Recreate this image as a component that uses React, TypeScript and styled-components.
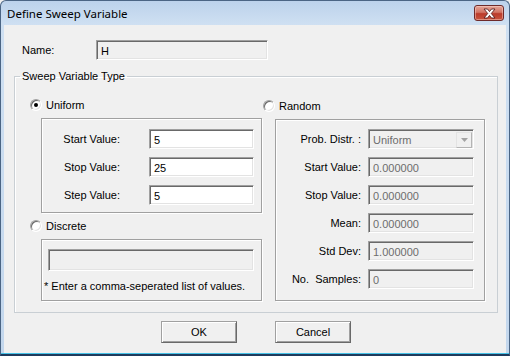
import { Fragment } from 'react';
import styled, { createGlobalStyle } from 'styled-components';

const GlobalStyle = createGlobalStyle`
  html, body {
    margin: 0;
    padding: 0;
    background: #f0f0f0;
  }
  body {
    font-family: 'Liberation Sans', Arial, sans-serif;
    font-size: 11px;
    color: #000;
  }
  * {
    box-sizing: border-box;
  }
`;

const Window = styled.div`
  width: 510px;
  height: 356px;
  display: flex;
  flex-direction: column;
  padding: 0 3px 1px;
  border: 1px solid #4b6584;
  border-bottom: 2px solid #1f3b5c;
  border-radius: 6px 6px 0 0;
  background: linear-gradient(#bcd2eb, #cfe0f2 24px, #c3d7ed);
  box-shadow: inset 0 -1px 0 #45c1e6;
`;

const TitleBar = styled.div`
  height: 24px;
  display: flex;
  align-items: center;
  justify-content: space-between;
  padding: 0 2px 0 3px;
`;

const Title = styled.span`
  font-family: 'Noto Sans', 'Liberation Sans', sans-serif;
  font-size: 11.5px;
  color: #000;
`;

const CloseButton = styled.div`
  width: 30px;
  height: 16px;
  display: flex;
  align-items: center;
  justify-content: center;
  border: 1px solid #6e2a2a;
  border-radius: 3px;
  background: linear-gradient(#e4a497, #d27565 45%, #bb3b2b 55%, #c8553f);
  box-shadow: inset 0 0 0 1px rgba(255, 220, 210, 0.45);
`;

const Client = styled.div`
  flex: 1;
  display: flex;
  flex-direction: column;
  background: #f0f0f0;
  padding: 15px 8px 0 10px;
`;

const NameRow = styled.div`
  display: flex;
  align-items: center;
  height: 20px;
  padding-left: 8px;
`;

const NameLabel = styled.span`
  width: 74px;
`;

const Edit = styled.div<{ $width?: number; $height?: number; $disabled?: boolean; $readOnly?: boolean }>`
  width: ${p => (p.$width ? `${p.$width}px` : '100%')};
  height: ${p => p.$height ?? 20}px;
  display: flex;
  align-items: center;
  padding: 1px 4px 0;
  border: 1px solid;
  border-color: #a0a0a0 #fff #fff #a0a0a0;
  box-shadow: inset 1px 1px 0 #696969, inset -1px -1px 0 #e3e3e3;
  background: ${p => (p.$disabled || p.$readOnly ? '#f0f0f0' : '#fff')};
  color: ${p => (p.$disabled ? '#6d6d6d' : '#000')};
  white-space: nowrap;
  overflow: hidden;
`;

const Combo = styled(Edit)`
  padding-right: 1px;
  justify-content: space-between;
`;

const DropButton = styled.div`
  width: 16px;
  height: 16px;
  display: flex;
  align-items: center;
  justify-content: center;
  border: 1px solid;
  border-color: #e3e3e3 #b4b4b4 #b4b4b4 #e3e3e3;
  background: #f0f0f0;
`;

const GroupBox = styled.fieldset`
  margin: 10px 0 0;
  padding: 0;
  min-width: 0;
  border: 1px solid #c9cfd4;
  box-shadow: inset 1px 1px 0 #fff;
`;

const Caption = styled.legend`
  margin-left: 5px;
  padding: 0 2px;
  line-height: 13px;
  font-size: 11px;
`;

const Columns = styled.div`
  display: grid;
  grid-template-columns: 233px 1fr;
  padding: 14px 12px 11px 15px;
`;

const Column = styled.div<{ $offset?: number }>`
  display: flex;
  flex-direction: column;
  gap: 5px;
  padding-top: ${p => p.$offset ?? 0}px;
`;

const RadioRow = styled.label`
  display: flex;
  align-items: center;
  gap: 4px;
  height: 16px;
  line-height: 13px;
`;

const RadioDot = styled.span<{ $checked?: boolean }>`
  position: relative;
  width: 12px;
  height: 12px;
  border-radius: 50%;
  border: 1px solid;
  border-color: #a0a0a0 #fff #fff #a0a0a0;
  box-shadow: inset 1px 1px 0 #696969, inset -1px -1px 0 #e3e3e3;
  background: #fff;
  &::after {
    content: '';
    display: ${p => (p.$checked ? 'block' : 'none')};
    position: absolute;
    left: 3px;
    top: 3px;
    width: 4px;
    height: 4px;
    border-radius: 50%;
    background: #000;
  }
`;

const Panel = styled.div<{ $width: number; $indent: number }>`
  width: ${p => p.$width}px;
  margin-left: ${p => p.$indent}px;
  border: 1px solid #a0a0a0;
  box-shadow: inset 1px 1px 0 #fff, 1px 1px 0 #fff;
`;

const FieldGrid = styled(Panel)<{ $labelWidth: number; $fieldWidth: number; $gap: number; $pad: string }>`
  display: grid;
  grid-template-columns: ${p => `${p.$labelWidth}px ${p.$fieldWidth}px`};
  grid-auto-rows: 20px;
  column-gap: ${p => p.$gap}px;
  row-gap: 8px;
  align-items: center;
  padding: ${p => p.$pad};
`;

const FieldLabel = styled.span`
  text-align: right;
  white-space: pre;
`;

const DiscreteBox = styled(Panel)`
  display: flex;
  flex-direction: column;
  padding: 9px 7px 7px 2px;
`;

const DiscreteInput = styled(Edit)`
  margin-left: 4px;
  width: auto;
`;

const Note = styled.div`
  margin-top: 9px;
  line-height: 13px;
  white-space: nowrap;
`;

const ButtonRow = styled.div`
  display: flex;
  justify-content: center;
  gap: 38px;
  margin-top: 8px;
`;

const Button = styled.div`
  width: 76px;
  height: 22px;
  display: flex;
  align-items: center;
  justify-content: center;
  border: 1px solid;
  border-color: #a0a0a0 #696969 #696969 #a0a0a0;
  box-shadow: inset 1px 1px 0 #fff, inset -1px -1px 0 #a0a0a0;
  background: #f0f0f0;
`;

function CloseGlyph() {
  return (
    <svg width='13' height='11' viewBox='0 0 13 11'>
      <polygon
        points='1,1 4.5,1 6.5,3.6 8.5,1 12,1 8.3,5.5 12,10 8.5,10 6.5,7.4 4.5,10 1,10 4.7,5.5'
        fill='#fff'
        stroke='#5a2020'
        strokeWidth='0.9'
        strokeLinejoin='round'
      />
    </svg>
  );
}

function DownArrow() {
  return (
    <svg width='7' height='4' viewBox='0 0 7 4'>
      <path d='M0 0h7L3.5 4z' fill='#a3a3a3' />
    </svg>
  );
}

function Radio({ label, checked }: { label: string; checked?: boolean }) {
  return (
    <RadioRow>
      <RadioDot $checked={checked} />
      <span>{label}</span>
    </RadioRow>
  );
}

const uniformFields = [
  ['Start Value:', '5'],
  ['Stop Value:', '25'],
  ['Step Value:', '5'],
];

const randomFields = [
  ['Start Value:', '0.000000'],
  ['Stop Value:', '0.000000'],
  ['Mean:', '0.000000'],
  ['Std Dev:', '1.000000'],
  ['No.  Samples:', '0'],
];

export default function App() {
  return (
    <>
      <GlobalStyle />
      <Window>
        <TitleBar>
          <Title>Define Sweep Variable</Title>
          <CloseButton>
            <CloseGlyph />
          </CloseButton>
        </TitleBar>
        <Client>
          <NameRow>
            <NameLabel>Name:</NameLabel>
            <Edit $width={172} $readOnly>H</Edit>
          </NameRow>

          <GroupBox>
            <Caption>Sweep Variable Type</Caption>
            <Columns>
              <Column>
                <Radio label='Uniform' checked />
                <FieldGrid
                  $width={221}
                  $indent={11}
                  $labelWidth={78}
                  $fieldWidth={105}
                  $gap={29}
                  $pad='10px 7px 7px 0'
                >
                  {uniformFields.map(([label, value]) => (
                    <Fragment key={label}>
                      <FieldLabel>{label}</FieldLabel>
                      <Edit>{value}</Edit>
                    </Fragment>
                  ))}
                </FieldGrid>
                <Radio label='Discrete' />
                <DiscreteBox $width={221} $indent={11}>
                  <DiscreteInput $height={22} $readOnly />
                  <Note>* Enter a comma-seperated list of values.</Note>
                </DiscreteBox>
              </Column>

              <Column $offset={1}>
                <Radio label='Random' />
                <FieldGrid
                  $width={210}
                  $indent={12}
                  $labelWidth={85}
                  $fieldWidth={106}
                  $gap={7}
                  $pad='9px 10px 11px 0'
                >
                  <FieldLabel>Prob. Distr. :</FieldLabel>
                  <Combo $disabled>
                    <span>Uniform</span>
                    <DropButton>
                      <DownArrow />
                    </DropButton>
                  </Combo>
                  {randomFields.map(([label, value]) => (
                    <Fragment key={label}>
                      <FieldLabel>{label}</FieldLabel>
                      <Edit $disabled>{value}</Edit>
                    </Fragment>
                  ))}
                </FieldGrid>
              </Column>
            </Columns>
          </GroupBox>

          <ButtonRow>
            <Button>OK</Button>
            <Button>Cancel</Button>
          </ButtonRow>
        </Client>
      </Window>
    </>
  );
}
